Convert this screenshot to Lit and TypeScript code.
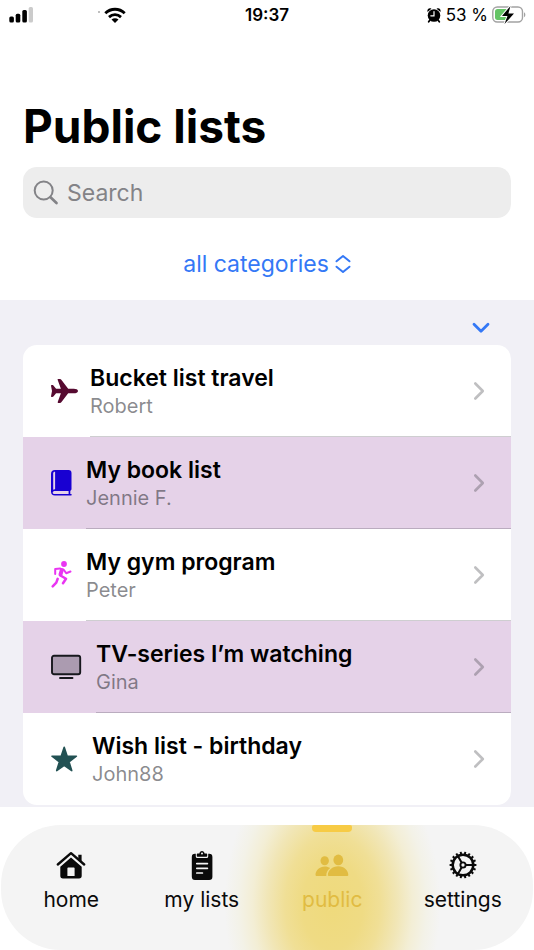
import { LitElement, html, svg, css } from "lit";
import { customElement, property, state } from "lit/decorators.js";
import { classMap } from "lit/directives/class-map.js";

interface ListEntry {
  title: string;
  owner: string;
  icon: string;
}

const LISTS: ListEntry[] = [
  { title: "Bucket list travel", owner: "Robert", icon: "plane" },
  { title: "My book list", owner: "Jennie F.", icon: "book" },
  { title: "My gym program", owner: "Peter", icon: "runner" },
  { title: "TV-series I’m watching", owner: "Gina", icon: "tv" },
  { title: "Wish list - birthday", owner: "John88", icon: "star" },
];

const TABS = [
  { id: "home", label: "home" },
  { id: "lists", label: "my lists" },
  { id: "public", label: "public" },
  { id: "settings", label: "settings" },
];

// Teeth of the settings gear, spread evenly round the rim.
const gearTeeth = Array.from({ length: 18 }, (_, i) => {
  const a = (i * Math.PI) / 9;
  const p = (r: number) => `${(15 + r * Math.cos(a)).toFixed(2)} ${(15 + r * Math.sin(a)).toFixed(2)}`;
  return `M${p(11)}L${p(13.4)}`;
}).join("");

const ICONS: Record<string, { w: number; h: number; body: unknown }> = {
  plane: {
    w: 27, h: 26,
    body: svg`<path fill="#560a30" d="M27 13c0 1.400-2 2.300-4.200 2.300h-5.600L10.300 24.300c-.3.500-.8.700-1.300.7H7.200c-.5 0-.7-.4-.5-.9l3.200-8.800H5.100l-2.700 3.200c-.3.300-.6.400-1 .4H.600c-.4 0-.6-.2-.6-.6L1 13 0 7.700c0-.4.200-.6.600-.6h.8c.4 0 .7.100 1 .4l2.700 3.200h4.800L6.700 1.900c-.2-.5 0-.9.500-.9H9c.5 0 1 .2 1.300.7l6.900 9h5.600c2.200 0 4.200.9 4.200 2.300z"/>`,
  },
  book: {
    w: 23, h: 26,
    body: svg`<path fill="#1800d2" fill-rule="evenodd" d="M4 0h13.500C19.500 0 20.500 1 20.500 3v16c0 .9-.4 1.500-1.200 1.800v3.200h.7c1 0 1 1.600 0 1.600H4c-2.600 0-4-1.400-4-4V4c0-2.600 1.400-4 4-4zM2.200 3v16.800c.4-.3 1-.6 1.900-.6V1.800c-1 0-1.600.4-1.900 1.200zM4.100 20.900c-1.600 0-2.400.6-2.400 1.600s.8 1.500 2.400 1.500h13.500v-3.100z"/>`,
  },
  runner: {
    w: 23, h: 28,
    body: svg`<circle cx="13" cy="3" r="2.900" fill="#e935f2"/>
      <g fill="none" stroke="#e935f2" stroke-linecap="round" stroke-linejoin="round">
        <path stroke-width="2" d="M4.200 13V8.100l5-.6M12.500 8.500l2.700 3.700 4.300-1.700"/>
        <path stroke-width="4" d="M10.800 9l-1.300 4.500"/>
        <path stroke-width="2.500" d="M9.500 14.500l5.500 3.300-3 4.400M6.700 17.800l-1.400 3.800-3.600 3.700"/>
      </g>`,
  },
  tv: {
    w: 33, h: 26,
    body: svg`<rect x="1" y="1.800" width="28.200" height="18.400" rx="2" fill="#ab9bb0" stroke="#17181d" stroke-width="1.900"/>
      <path d="M9 24h12.500" stroke="#17181d" stroke-width="1.900" stroke-linecap="round"/>`,
  },
  star: {
    w: 29, h: 28,
    body: svg`<path fill="#225153" stroke="#225153" stroke-width="1.600" stroke-linejoin="round"
      d="M13.200 2.300l2.900 8.800 9.300.1-7.400 5.600 2.700 8.800-7.500-5.300-7.500 5.300 2.700-8.800L1 11.200l9.300-.1z"/>`,
  },
  home: {
    w: 30, h: 30,
    body: svg`<path fill="none" stroke="currentColor" stroke-width="2.400" stroke-linecap="round" stroke-linejoin="round" d="M1.800 14.500L15 3.200l13.200 11.300"/>
      <path fill="currentColor" fill-rule="evenodd" d="M22.300 4.700h3.300v6.600l-3.300-2.800zM15 7.500l10.700 9.200v9.100c0 1.800-.9 2.700-2.700 2.700H7c-1.800 0-2.700-.9-2.700-2.700v-9.100zM12.200 17.500c-.5 0-.8.300-.8.800V26h7.200v-7.700c0-.5-.3-.8-.8-.8z"/>`,
  },
  lists: {
    w: 30, h: 30,
    body: svg`<path fill="currentColor" d="M8 3.800c-2.200 0-3.200 1.100-3.200 3.200v19.500C4.800 28.900 5.900 30 8 30h14.200c2.200 0 3.200-1.100 3.200-3.200V7c0-2.100-1-3.200-3.200-3.200h-1v2.400c0 1.200-.7 1.900-1.900 1.900h-8.600c-1.200 0-1.900-.7-1.900-1.900V3.800z"/>
      <path fill="currentColor" fill-rule="evenodd" d="M10.500 3.600h1.900C12.600 2 13.600 1 15 1s2.400 1 2.600 2.600h1.900c.4 0 .7.300.7.700v1.500c0 .6-.4 1-1 1h-8.400c-.6 0-1-.4-1-1V4.300c0-.4.300-.7.700-.7zM15 2.600a1 1 0 100 2 1 1 0 000-2z"/>
      <path fill="none" stroke="#f4f4f4" stroke-width="1.700" stroke-linecap="round" d="M9.800 13.600h10.600M9.800 18.300h10.600M9.800 23h5.600"/>`,
  },
  public: {
    w: 36, h: 30,
    body: svg`<g fill="currentColor"><ellipse cx="10.700" cy="10.800" rx="4.200" ry="4.500"/><ellipse cx="24.300" cy="9.900" rx="4.900" ry="5.300"/>
      <path d="M1.500 24.700c0-4.300 4.200-8.300 9.300-8.300 2 0 3.900.6 5.400 1.600-2.500 1.900-3.900 4.600-3.900 7.200 0 .3 0 .6.100.8H2.900C2 26 1.500 25.500 1.500 24.700z"/>
      <path d="M13.900 24.900c0-4.200 4.400-8.600 10.400-8.600s10 4.400 10 8.600c0 .8-.5 1.100-1.400 1.100H15.300c-.9 0-1.400-.3-1.400-1.100z"/></g>`,
  },
  settings: {
    w: 30, h: 30,
    body: svg`<g fill="none" stroke="currentColor"><circle cx="15" cy="15" r="10.300" stroke-width="2.500"/>
      <path d="${gearTeeth}" stroke-width="2"/>
      <circle cx="15" cy="15" r="2.600" stroke-width="1.900"/>
      <path d="M17.800 15h7M13.600 12.600L10 6.300M13.600 17.400L10 23.700" stroke-width="2"/></g>`,
  },
};

function icon(name: string) {
  const { w, h, body } = ICONS[name];
  return html`<svg width=${w} height=${h} viewBox="0 0 ${w} ${h}" aria-hidden="true">${body}</svg>`;
}

@customElement("status-bar")
export class StatusBar extends LitElement {
  static styles = css`
    :host {
      display: grid;
      grid-template-columns: 1fr auto 1fr;
      align-items: center;
      height: 30px;
      padding: 0 8px;
      font-size: 17px;
      line-height: 20px;
    }
    svg { display: block; flex: none; }
    .signal { display: flex; align-items: center; gap: 64px; }
    .time { font-weight: 600; }
    .power { display: flex; align-items: center; justify-content: flex-end; gap: 4px; }
  `;

  render() {
    return html`
      <div class="signal">
        <svg width="26" height="16" viewBox="0 0 26 16" role="img" aria-label="Signal strength">
          <rect x="1.300" y="9.500" width="4.600" height="6" rx="1.500" /><rect x="7.700" y="6.700" width="4.600" height="8.800" rx="1.500" />
          <rect x="14.300" y="3" width="4.600" height="12.500" rx="1.500" /><rect x="20.700" y="0" width="4.300" height="15.500" rx="1.500" fill="#cbcbcb" />
        </svg>
        <svg width="34" height="18" viewBox="0 0 34 18" role="img" aria-label="Wi-Fi">
          <circle cx="1" cy="6" r="1" fill="#aaa" />
          <g fill="none" stroke="#000" stroke-width="2.800">
            <path d="M7.300 7.300c5.500-5.400 13.900-5.400 19.400 0" /><path d="M11 11.100c3.500-3.200 8.500-3.200 12 0" />
          </g>
          <path d="M17 17l-3.500-3.600c2-1.700 5-1.700 7 0z" />
        </svg>
      </div>
      <time class="time">19:37</time>
      <div class="power">
        <svg width="16" height="18" viewBox="0 0 16 18" role="img" aria-label="Alarm set">
          <circle cx="8" cy="9.500" r="6.300" />
          <path d="M1.500 6C.7 3.400 3.300 1.400 5.400 2.800zM14.500 6C15.300 3.400 12.700 1.400 10.600 2.800z" />
          <path d="M4 14l-1.300 1.800M12 14l1.300 1.800" stroke="#000" stroke-width="1.800" stroke-linecap="round" />
          <path d="M8 5.500v4.300H4.800" fill="none" stroke="#fff" stroke-width="1.200" stroke-linecap="round" />
        </svg>
        <span>53 %</span>
        <svg width="34" height="20" viewBox="0 0 34 20" role="img" aria-label="Charging">
          <rect x=".8" y="2" width="29.700" height="15" rx="4.500" fill="#fff" stroke="#a3a3a3" stroke-width="1.400" />
          <path d="M5.500 4H17v11H5.500C3.900 15 3 14.100 3 12.500v-6C3 4.900 3.900 4 5.500 4z" fill="#65c466" />
          <path d="M32 7.300c1.800.8 1.800 4.200 0 5z" fill="#a3a3a3" />
          <path d="M18.500 1L10 11h5.500l-3 8L22 8.600h-5.600z" stroke="#fff" stroke-width="2" paint-order="stroke" />
        </svg>
      </div>
    `;
  }
}

@customElement("list-row")
export class ListRow extends LitElement {
  @property({ attribute: false }) entry!: ListEntry;

  static styles = css`
    :host { display: block; }
    .row {
      display: flex;
      gap: 12px;
      height: 92px;
      padding-left: 28px;
      color: #000;
      text-decoration: none;
    }
    .row > svg { flex: none; align-self: center; }
    .body {
      flex: 1;
      display: flex;
      align-items: center;
      justify-content: space-between;
      padding-right: 26px;
      border-bottom: 1px solid var(--separator, rgba(60, 60, 67, 0.25));
    }
    .text { display: flex; flex-direction: column; padding-top: 2px; }
    .title { font-size: 23px; font-weight: 600; line-height: 28px; }
    .owner { font-size: 20px; line-height: 28px; color: rgba(60, 60, 67, 0.6); }
    .chevron { flex: none; }
  `;

  render() {
    return html`
      <a class="row" href="#list">
        ${icon(this.entry.icon)}
        <span class="body">
          <span class="text">
            <span class="title">${this.entry.title}</span>
            <span class="owner">${this.entry.owner}</span>
          </span>
          <svg class="chevron" width="12" height="20" viewBox="0 0 12 20" aria-hidden="true">
            <path d="M2.300 2.500L9.800 10l-7.500 7.500" fill="none" stroke="rgba(60,60,67,.33)" stroke-width="2.600" stroke-linecap="round" stroke-linejoin="round" />
          </svg>
        </span>
      </a>
    `;
  }
}

@customElement("tab-bar")
export class TabBar extends LitElement {
  @state() private active = "public";

  static styles = css`
    :host {
      display: block;
      margin: 0 1px;
      border-radius: 60px;
      overflow: hidden;
      background: #f4f4f4;
    }
    .tabs { display: grid; grid-template-columns: repeat(4, 1fr); padding: 0 5px; }
    .tab {
      position: relative;
      display: flex;
      flex-direction: column;
      align-items: center;
      gap: 5px;
      height: 125px;
      padding: 25px 0 0;
      border: 0;
      background: none;
      color: #0a0a0a;
      font: inherit;
      font-size: 21px;
      line-height: 30px;
    }
    .tab svg { position: relative; flex: none; }
    .tab span { position: relative; }
    .active { color: #e1bc42; }
    .active::before {
      content: "";
      position: absolute;
      inset: 0 -50px;
      background: radial-gradient(ellipse 108px 160px at 50% 64%, #efda7c 0%, #efdb84 28%, #f0df96 44%, #f1e6b6 60%, #f3eed5 74%, #f3f2e8 87%, rgba(244, 244, 244, 0) 100%);
    }
    .active::after {
      content: "";
      position: absolute;
      top: 0;
      width: 40px;
      height: 7px;
      border-radius: 2px 2px 4px 4px;
      background: #f7cb45;
    }
    .tab:not(.active) { z-index: 1; }
  `;

  render() {
    return html`
      <nav class="tabs">
        ${TABS.map(
          (t) => html`
            <button class=${classMap({ tab: true, active: t.id === this.active })} @click=${() => (this.active = t.id)}>
              ${icon(t.id)}<span>${t.label}</span>
            </button>
          `
        )}
      </nav>
    `;
  }
}

@customElement("app-root")
export class AppRoot extends LitElement {
  static styles = css`
    :host {
      display: flex;
      flex-direction: column;
      min-height: 100vh;
      background: #fff;
      color: #000;
      font-family: Inter, "Liberation Sans", sans-serif;
    }
    .header {
      display: flex;
      flex-direction: column;
      padding: 68px 23px 0;
    }
    .heading { margin: 0; font-size: 46px; font-weight: 700; line-height: 56px; }
    .search {
      display: flex;
      align-items: center;
      gap: 8px;
      height: 51px;
      margin-top: 13px;
      padding: 0 10px;
      border-radius: 14px;
      background: #ededed;
    }
    .search svg { flex: none; }
    .field {
      flex: 1;
      min-width: 0;
      padding: 0;
      border: 0;
      outline: 0;
      background: none;
      color: #000;
      font: inherit;
      font-size: 23px;
      line-height: 30px;
    }
    .field::placeholder { color: #838387; opacity: 1; }
    .category {
      display: flex;
      align-items: center;
      align-self: center;
      gap: 6px;
      margin: 31px 0 21px;
      padding: 0;
      border: 0;
      background: none;
      color: #3478f6;
      font: inherit;
      font-size: 23px;
      line-height: 30px;
    }
    .content { padding: 0 23px 2px; background: #f1f0f6; }
    .toolbar { display: flex; justify-content: flex-end; height: 45px; padding-right: 20px; }
    .collapse { display: flex; align-items: center; padding: 11px 0 0; border: 0; background: none; color: #3478f6; }
    .card { margin: 0; padding: 0; overflow: hidden; border-radius: 14px; background: #fff; list-style: none; }
    .item:nth-child(even) { background: #e5d2e8; }
    .item:last-child { --separator: transparent; }
    .tabbar { margin-top: auto; }
  `;

  render() {
    return html`
      <status-bar></status-bar>
      <header class="header">
        <h1 class="heading">Public lists</h1>
        <label class="search">
          <svg width="26" height="26" viewBox="0 0 26 26" aria-hidden="true">
            <g fill="none" stroke="#838387" stroke-width="2" stroke-linecap="round">
              <circle cx="10.700" cy="10.500" r="9" /><path d="M17.500 17.300l6 5.700" stroke-width="2.700" />
            </g>
          </svg>
          <input class="field" type="search" placeholder="Search" aria-label="Search" />
        </label>
        <button class="category">
          all categories
          <svg width="16" height="20" viewBox="0 0 16 20" aria-hidden="true">
            <path d="M1.500 7.300L8 2l6.500 5.300M1.500 12.700L8 18l6.500-5.300" fill="none" stroke="currentColor" stroke-width="2" stroke-linecap="round" stroke-linejoin="round" />
          </svg>
        </button>
      </header>
      <main class="content">
        <div class="toolbar">
          <button class="collapse" aria-label="Collapse section">
            <svg width="20" height="12" viewBox="0 0 20 12" aria-hidden="true">
              <path d="M3 2.300l7 7 7-7" fill="none" stroke="currentColor" stroke-width="2.800" stroke-linecap="round" stroke-linejoin="round" />
            </svg>
          </button>
        </div>
        <ul class="card">
          ${LISTS.map((entry) => html`<li class="item"><list-row .entry=${entry}></list-row></li>`)}
        </ul>
      </main>
      <tab-bar class="tabbar"></tab-bar>
    `;
  }
}
